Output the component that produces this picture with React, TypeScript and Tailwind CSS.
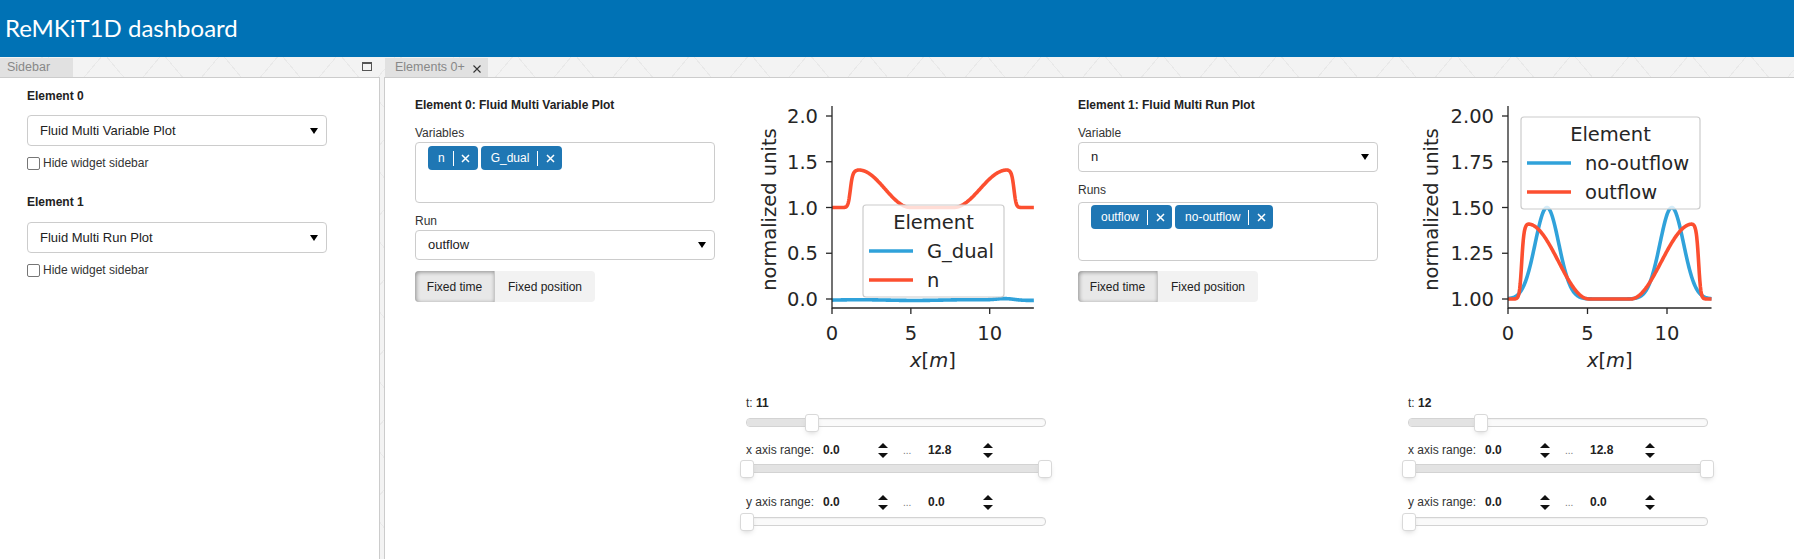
import React from "react";

const BLUE = "#30a2da";
const RED = "#fc4f30";
const INK = "#262626";
const PLOT_FONT = "'DejaVu Sans', sans-serif";

// smooth hump with one sharp edge, one cosine flank
function hump(u: number, edge: number, peak: number, end: number) {
  const dir = end > peak ? 1 : -1;
  const rise = 1 / (1 + Math.exp((-dir * (u - edge)) / 0.07));
  const d = (u - peak) * dir;
  let a: number;
  if (d <= 0) {
    const k = -d / (Math.abs(peak - edge) + 0.35);
    a = 1 - 0.35 * k * k;
  } else {
    const t = Math.min(1, d / Math.abs(end - peak));
    a = 0.5 * (1 + Math.cos(Math.PI * t));
  }
  return rise * a;
}

function linePath(f: (u: number) => number, sx: (u: number) => number, sy: (v: number) => number) {
  let d = "";
  const n = 400;
  for (let i = 0; i <= n; i++) {
    const u = (12.8 * i) / n;
    d += (i ? "L" : "M") + sx(u).toFixed(2) + "," + sy(f(u)).toFixed(2);
  }
  return d;
}

type Series = { name: string; color: string; f: (u: number) => number };

function Plot({
  spineX,
  xScale,
  yTicks,
  yOf,
  series,
  legend,
}: {
  spineX: number;
  xScale: number;
  yTicks: [number, string][];
  yOf: (v: number) => number;
  series: Series[];
  legend: { x: number; y: number; w: number; h: number; items: Series[] };
}) {
  const sx = (u: number) => spineX + u * xScale;
  const xEnd = sx(12.8);
  const rowY = [legend.y + 46, legend.y + 75];
  return (
    <svg width={310} height={300} className="block overflow-visible" style={{ fontFamily: PLOT_FONT }}>
      {series.map((s) => (
        <path key={s.name} d={linePath(s.f, sx, yOf)} fill="none" stroke={s.color} strokeWidth={3.6} strokeLinejoin="round" />
      ))}
      <line x1={spineX} y1={11} x2={spineX} y2={213.6} stroke={INK} strokeWidth={1.3} />
      <line x1={spineX} y1={213} x2={xEnd} y2={213} stroke={INK} strokeWidth={1.3} />
      {yTicks.map(([v, label]) => (
        <g key={label}>
          <line x1={spineX - 6} y1={yOf(v)} x2={spineX} y2={yOf(v)} stroke={INK} strokeWidth={1.3} />
          <text x={spineX - 14} y={yOf(v) + 7.1} textAnchor="end" fontSize={19.5} fill={INK}>
            {label}
          </text>
        </g>
      ))}
      {[0, 5, 10].map((u) => (
        <g key={u}>
          <line x1={sx(u)} y1={213} x2={sx(u)} y2={219} stroke={INK} strokeWidth={1.3} />
          <text x={sx(u)} y={245} textAnchor="middle" fontSize={19.5} fill={INK}>
            {u}
          </text>
        </g>
      ))}
      <text transform="translate(29.5,114.5) rotate(-90)" textAnchor="middle" fontSize={19.5} fill={INK}>
        normalized units
      </text>
      <text x={(spineX + xEnd) / 2} y={272} textAnchor="middle" fontSize={19.5} fill={INK}>
        <tspan fontStyle="italic">x</tspan>[<tspan fontStyle="italic">m</tspan>]
      </text>
      <rect x={legend.x} y={legend.y} width={legend.w} height={legend.h} rx={3} fill="#ffffff" fillOpacity={0.8} stroke="#cccccc" strokeWidth={1.2} />
      <text x={legend.x + legend.w / 2} y={legend.y + 24} textAnchor="middle" fontSize={19.5} fill={INK}>
        Element
      </text>
      {legend.items.map((s, i) => (
        <g key={s.name}>
          <line x1={legend.x + 6} y1={rowY[i]} x2={legend.x + 50} y2={rowY[i]} stroke={s.color} strokeWidth={3.6} />
          <text x={legend.x + 64} y={rowY[i] + 7} fontSize={19.5} fill={INK}>
            {s.name}
          </text>
        </g>
      ))}
    </svg>
  );
}

function Caret() {
  return (
    <svg width="8" height="6" viewBox="0 0 8 6">
      <polygon points="0,0 8,0 4,6" fill="#000" />
    </svg>
  );
}

function SelectBox({ value, className = "" }: { value: string; className?: string }) {
  return (
    <div className={`flex w-[300px] items-center justify-between rounded-[4px] border border-[#cccccc] bg-white pl-[12px] pr-[8px] text-[13px] text-[#222] ${className}`}>
      <span>{value}</span>
      <Caret />
    </div>
  );
}

function Chip({ label }: { label: string }) {
  return (
    <div className="flex h-[24px] items-center rounded-[4px] bg-[#1f77b4] pl-[10px] text-[12px] text-white">
      <span>{label}</span>
      <span className="ml-[8px] h-[15px] w-px bg-white" />
      <span className="flex w-[24px] justify-center">
        <svg width="9" height="9" viewBox="0 0 9 9">
          <path d="M1 1L8 8M8 1L1 8" stroke="#fff" strokeWidth="1.5" />
        </svg>
      </span>
    </div>
  );
}

function MultiBox({ chips, className = "" }: { chips: string[]; className?: string }) {
  return (
    <div className={`w-[300px] rounded-[4px] border border-[#cccccc] bg-white pl-[12px] ${className}`}>
      <div className="flex gap-[3px]">
        {chips.map((c) => (
          <Chip key={c} label={c} />
        ))}
      </div>
    </div>
  );
}

function ModeToggle() {
  return (
    <div className="mt-[10px] flex h-[31px] w-[180px] rounded-[4px] bg-[#f2f2f2] text-[12px] text-[#222]">
      <div className="flex w-[80px] items-center justify-center rounded-l-[4px] border-r border-[#c8c8c8] bg-[#e8e8e8] shadow-[inset_1px_1px_4px_rgba(0,0,0,0.4)]">
        Fixed time
      </div>
      <div className="flex flex-1 items-center justify-center">Fixed position</div>
    </div>
  );
}

function Label({ text, className = "" }: { text: string; className?: string }) {
  return <div className={`h-[14px] text-[12px] leading-[14px] text-[#333] ${className}`}>{text}</div>;
}

function Spinner() {
  return (
    <svg width="10" height="15" viewBox="0 0 10 15">
      <polygon points="5,0 10,5 0,5" fill="#111" />
      <polygon points="0,10 10,10 5,15" fill="#111" />
    </svg>
  );
}

function Thumb({ left }: { left: number }) {
  return (
    <div
      className="absolute top-[-5px] h-[18px] w-[14px] rounded-[3px] border border-[#d9d9d9] bg-white shadow-[0_3px_6px_-3px_#bbbbbb]"
      style={{ left: left - 7 }}
    />
  );
}

function Track({ from, to, thumbs, className = "" }: { from: number; to: number; thumbs: number[]; className?: string }) {
  return (
    <div className={`relative h-[9px] w-[300px] rounded-[4px] border border-[#d3d3d3] bg-[#fafafa] shadow-[inset_0_1px_1px_#f0f0f0] ${className}`}>
      <div className="absolute top-0 bottom-0 rounded-[3px] bg-[#e3e3e3]" style={{ left: from, width: to - from }} />
      {thumbs.map((t, i) => (
        <Thumb key={i} left={t} />
      ))}
    </div>
  );
}

function RangeRow({ label, lo, hi, className = "" }: { label: string; lo: string; hi: string; className?: string }) {
  return (
    <div className={`flex h-[22px] items-center text-[12px] text-[#333] ${className}`}>
      <span className="w-[75px] whitespace-nowrap">{label}</span>
      <span className="flex w-[68px] items-center justify-between pl-[2px] pr-[1px]">
        <b className="text-[#222]">{lo}</b>
        <Spinner />
      </span>
      <span className="w-[37px] pl-[14px] text-[10px] text-[#777]">...</span>
      <span className="flex w-[68px] items-center justify-between pl-[2px] pr-[1px]">
        <b className="text-[#222]">{hi}</b>
        <Spinner />
      </span>
    </div>
  );
}

function PlotControls({ t, thumb }: { t: string; thumb: number }) {
  return (
    <div className="flex flex-col">
      <div className="flex h-[16px] items-center text-[12px] text-[#333]">
        t:&nbsp;<b className="text-[#222]">{t}</b>
      </div>
      <Track className="mt-[7px]" from={0} to={thumb} thumbs={[thumb]} />
      <RangeRow className="mt-[12px]" label="x axis range:" lo="0.0" hi="12.8" />
      <Track className="mt-[3px]" from={0} to={298} thumbs={[0, 298]} />
      <RangeRow className="mt-[18px]" label="y axis range:" lo="0.0" hi="0.0" />
      <Track className="mt-[4px]" from={0} to={0} thumbs={[0]} />
    </div>
  );
}

const n1 = (u: number) => 1 + 0.41 * (hump(u, 1.15, 1.7, 5.0) + hump(u, 11.55, 11.1, 7.7));
const g1 = (u: number) => -0.012 + 0.004 * Math.sin(u * 0.9) + 0.018 * Math.exp(-(((u - 11) / 0.8) ** 2));
const out2 = (u: number) => 1 + 0.41 * (hump(u, 0.85, 1.25, 5.1) + hump(u, 12.0, 11.6, 7.7));
const noOut2 = (u: number) => 1 + 0.5 * (Math.exp(-(((u - 2.45) / 1.05) ** 2)) + Math.exp(-(((u - 10.3) / 1.05) ** 2)));

export default function App() {
  const gdual: Series = { name: "G_dual", color: BLUE, f: g1 };
  const nS: Series = { name: "n", color: RED, f: n1 };
  const noOut: Series = { name: "no-outflow", color: BLUE, f: noOut2 };
  const out: Series = { name: "outflow", color: RED, f: out2 };

  return (
    <div className="h-[559px] w-[1794px] overflow-hidden bg-white font-['Liberation_Sans',Arial,sans-serif]">
      <header className="flex h-[57px] items-center bg-[#0072b5] pl-[5px] pb-[2px] font-['Lato',sans-serif] text-[24px] text-white">
        ReMKiT1D dashboard
      </header>
      <div className="flex h-[502px] bg-[#f3f3f3] bg-[repeating-linear-gradient(50deg,transparent_0_44px,#e9e9e9_44px_45px),repeating-linear-gradient(-50deg,transparent_0_44px,#e9e9e9_44px_45px)]">
        {/* sidebar stack */}
        <section className="flex w-[380px] flex-col">
          <div className="flex h-[20px] items-end justify-between">
            <div className="h-[19px] w-[73px] bg-[#e1e1e1] pl-[7px] text-[12.5px] leading-[19px] text-[#888]">Sidebar</div>
            <div className="mr-[8px] mb-[6px] h-[9px] w-[10px] border border-t-2 border-[#555]" />
          </div>
          <div className="flex-1 border-t border-r border-[#cccccc] bg-white pt-[11px] pl-[27px]">
            <div className="h-[14px] text-[12px] leading-[14px] font-bold text-[#222]">Element 0</div>
            <SelectBox className="mt-[12px] h-[31px]" value="Fluid Multi Variable Plot" />
            <label className="mt-[10px] flex h-[14px] items-center gap-[3px] text-[12px] text-[#333]">
              <span className="h-[13px] w-[13px] rounded-[2px] border border-[#767676] bg-white" />
              Hide widget sidebar
            </label>
            <div className="mt-[25px] h-[14px] text-[12px] leading-[14px] font-bold text-[#222]">Element 1</div>
            <SelectBox className="mt-[13px] h-[31px]" value="Fluid Multi Run Plot" />
            <label className="mt-[10px] flex h-[14px] items-center gap-[3px] text-[12px] text-[#333]">
              <span className="h-[13px] w-[13px] rounded-[2px] border border-[#767676] bg-white" />
              Hide widget sidebar
            </label>
          </div>
        </section>
        <div className="w-[4px]" />
        {/* elements stack */}
        <section className="flex flex-1 flex-col">
          <div className="flex h-[20px] items-end">
            <div className="ml-px flex h-[19px] w-[103px] items-center bg-[#e1e1e1] pl-[10px] text-[12.5px] text-[#888]">
              Elements 0+
              <svg className="ml-[8px] mt-[3px]" width="8" height="8" viewBox="0 0 8 8">
                <path d="M0.5 0.5L7.5 7.5M7.5 0.5L0.5 7.5" stroke="#333" strokeWidth="1.1" />
              </svg>
            </div>
          </div>
          <div className="flex flex-1 border-t border-l border-[#cccccc] bg-white pt-[17px] pl-[30px]">
            {/* element 0 */}
            <div className="flex w-[300px] flex-col pt-[3px]">
              <div className="h-[14px] text-[12px] leading-[14px] font-bold text-[#222]">Element 0: Fluid Multi Variable Plot</div>
              <Label className="mt-[14px]" text="Variables" />
              <MultiBox className="mt-[2px] h-[61px] pt-[3px]" chips={["n", "G_dual"]} />
              <Label className="mt-[11px]" text="Run" />
              <SelectBox className="mt-[2px] h-[30px]" value="outflow" />
              <div className="mt-px">
                <ModeToggle />
              </div>
            </div>
            <div className="ml-[31px] flex w-[300px] flex-col">
              <Plot
                spineX={86}
                xScale={15.77}
                yTicks={[[0, "0.0"], [0.5, "0.5"], [1, "1.0"], [1.5, "1.5"], [2, "2.0"]]}
                yOf={(v) => 204 - v * 91.5}
                series={[gdual, nS]}
                legend={{ x: 117, y: 110, w: 141, h: 92, items: [gdual, nS] }}
              />
              <PlotControls t="11" thumb={65} />
            </div>
            {/* element 1 */}
            <div className="ml-[32px] flex w-[300px] flex-col pt-[3px]">
              <div className="h-[14px] text-[12px] leading-[14px] font-bold text-[#222]">Element 1: Fluid Multi Run Plot</div>
              <Label className="mt-[14px]" text="Variable" />
              <SelectBox className="mt-[2px] h-[30px]" value="n" />
              <Label className="mt-[11px]" text="Runs" />
              <MultiBox className="mt-[5px] h-[59px] pt-[2px]" chips={["outflow", "no-outflow"]} />
              <ModeToggle />
            </div>
            <div className="ml-[30px] flex w-[300px] flex-col">
              <Plot
                spineX={100}
                xScale={15.9}
                yTicks={[[1, "1.00"], [1.25, "1.25"], [1.5, "1.50"], [1.75, "1.75"], [2, "2.00"]]}
                yOf={(v) => 204 - (v - 1) * 183}
                series={[noOut, out]}
                legend={{ x: 113, y: 22, w: 179, h: 92, items: [noOut, out] }}
              />
              <PlotControls t="12" thumb={72} />
            </div>
          </div>
        </section>
      </div>
    </div>
  );
}
